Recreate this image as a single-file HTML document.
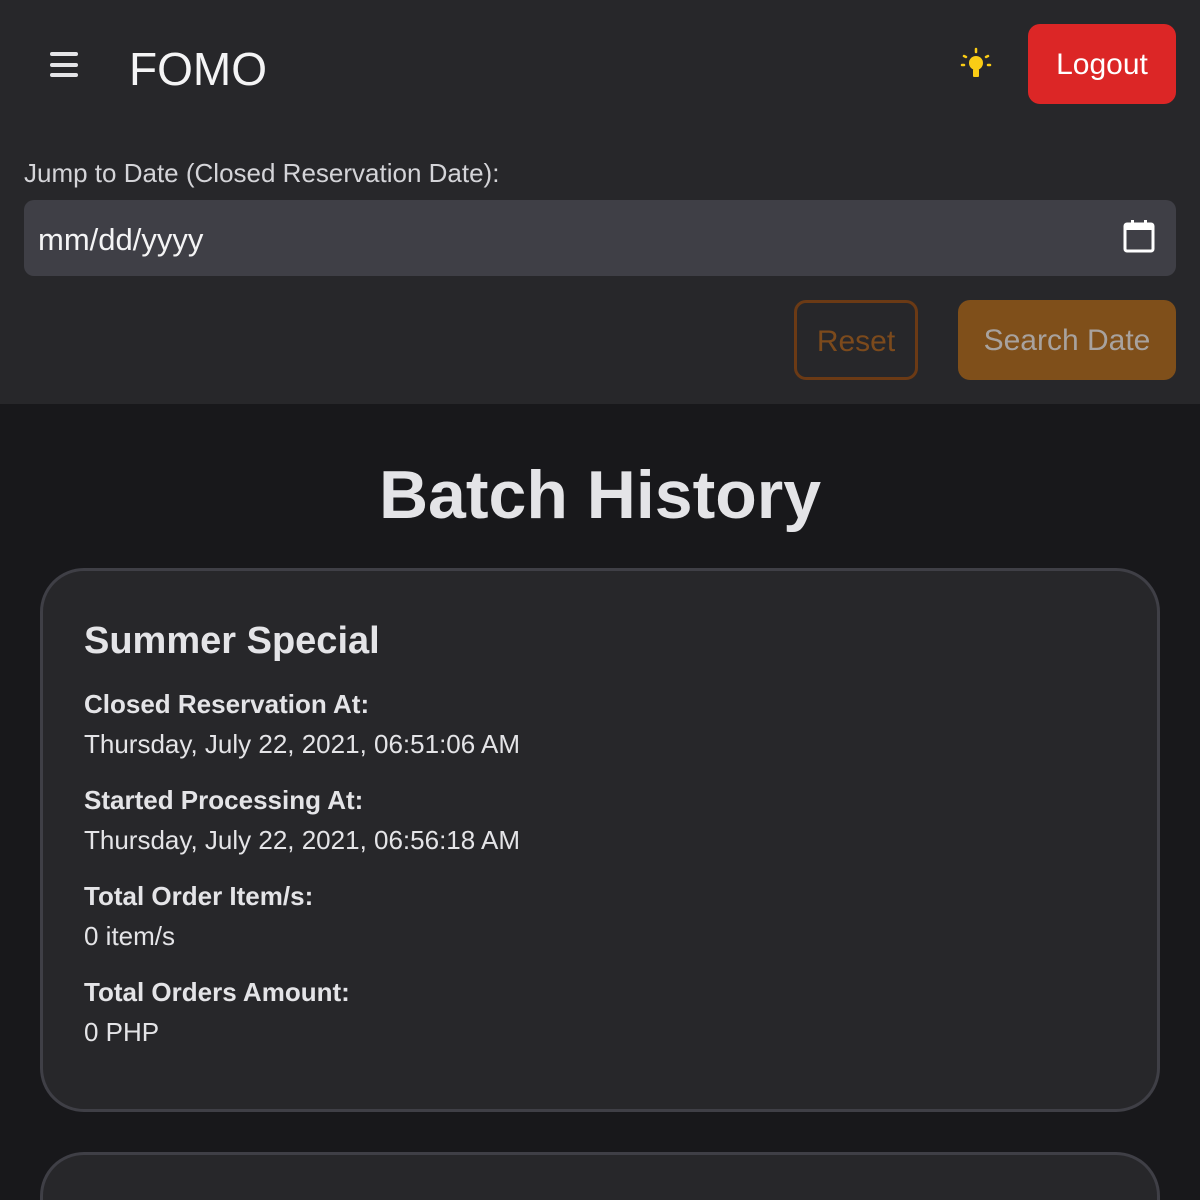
<!DOCTYPE html>
<html><head><style>
*{box-sizing:border-box;margin:0;padding:0}
html,body{width:1200px;height:1200px;overflow:hidden}
body{background:#18181b;font-family:"Liberation Sans",sans-serif;color:#e4e4e7;position:relative}
.top{position:absolute;left:0;top:0;width:1200px;height:404px;background:#27272a}
.abs{position:absolute}
</style></head><body>
<div class="top">
  <div class="abs" style="left:50px;top:52px;width:28px;height:4px;background:#e4e4e7;border-radius:2px"></div>
  <div class="abs" style="left:50px;top:63px;width:28px;height:4px;background:#e4e4e7;border-radius:2px"></div>
  <div class="abs" style="left:50px;top:73px;width:28px;height:4px;background:#e4e4e7;border-radius:2px"></div>
  <div class="abs" style="left:129px;top:42px;font-size:46px;color:#f4f4f5">FOMO</div>
  <svg class="abs" style="left:958px;top:46px" width="36" height="36" viewBox="0 0 36 36">
    <circle cx="18" cy="17" r="7" fill="#facc15"/><rect x="15" y="23" width="6" height="8" rx="1" fill="#facc15"/>
    <g stroke="#facc15" stroke-width="2.5" stroke-linecap="round"><line x1="18" y1="3" x2="18" y2="6"/><line x1="6" y1="10" x2="8" y2="11"/><line x1="30" y1="10" x2="28" y2="11"/><line x1="4" y1="19" x2="6" y2="19"/><line x1="32" y1="19" x2="30" y2="19"/></g>
  </svg>
  <div class="abs" style="left:1028px;top:24px;width:148px;height:80px;background:#dc2626;border-radius:12px;color:#fff;font-size:30px;line-height:82px;text-align:center">Logout</div>
  <div class="abs" style="left:24px;top:158px;font-size:26px;color:#d4d4d8">Jump to Date (Closed Reservation Date):</div>
  <div class="abs" style="left:24px;top:200px;width:1152px;height:76px;background:#3f3f46;border-radius:10px"></div>
  <div class="abs" style="left:38px;top:222px;font-size:31px;color:#f4f4f5">mm/dd/yyyy</div>
  <svg class="abs" style="left:1122px;top:218px" width="34" height="36" viewBox="0 0 34 36"><rect x="3" y="6" width="28" height="27" rx="2" fill="none" stroke="#fff" stroke-width="3"/><rect x="3" y="6" width="28" height="6" fill="#fff"/><rect x="9" y="2" width="3" height="6" fill="#fff"/><rect x="22" y="2" width="3" height="6" fill="#fff"/></svg>
  <div class="abs" style="left:794px;top:300px;width:124px;height:80px;border:3px solid #6b3a15;border-radius:12px;color:#7c4a1c;font-size:30px;line-height:78px;text-align:center">Reset</div>
  <div class="abs" style="left:958px;top:300px;width:218px;height:80px;background:#7f4f1a;border-radius:12px;color:#a8a29e;font-size:30px;line-height:82px;text-align:center">Search Date</div>
</div>
<div class="abs" style="left:0;top:456px;width:1200px;text-align:center;font-size:68px;font-weight:bold;color:#e4e4e7">Batch History</div>
<div class="abs" style="left:40px;top:568px;width:1120px;height:544px;background:#27272a;border:3px solid #3f3f46;border-radius:44px"></div>
<div class="abs" style="left:84px;top:620px;font-size:38px;font-weight:bold;color:#e4e4e7">Summer Special</div>
<div class="abs" style="left:84px;top:684px;font-size:26px;line-height:40px;color:#e4e4e7">
<b>Closed Reservation At:</b><br>Thursday, July 22, 2021, 06:51:06 AM<br><div style="height:16px"></div>
<b>Started Processing At:</b><br>Thursday, July 22, 2021, 06:56:18 AM<br><div style="height:16px"></div>
<b>Total Order Item/s:</b><br>0 item/s<br><div style="height:16px"></div>
<b>Total Orders Amount:</b><br>0 PHP
</div>
<div class="abs" style="left:40px;top:1152px;width:1120px;height:48px;background:#27272a;border:3px solid #3f3f46;border-bottom:none;border-radius:44px 44px 0 0"></div>
</body></html>
